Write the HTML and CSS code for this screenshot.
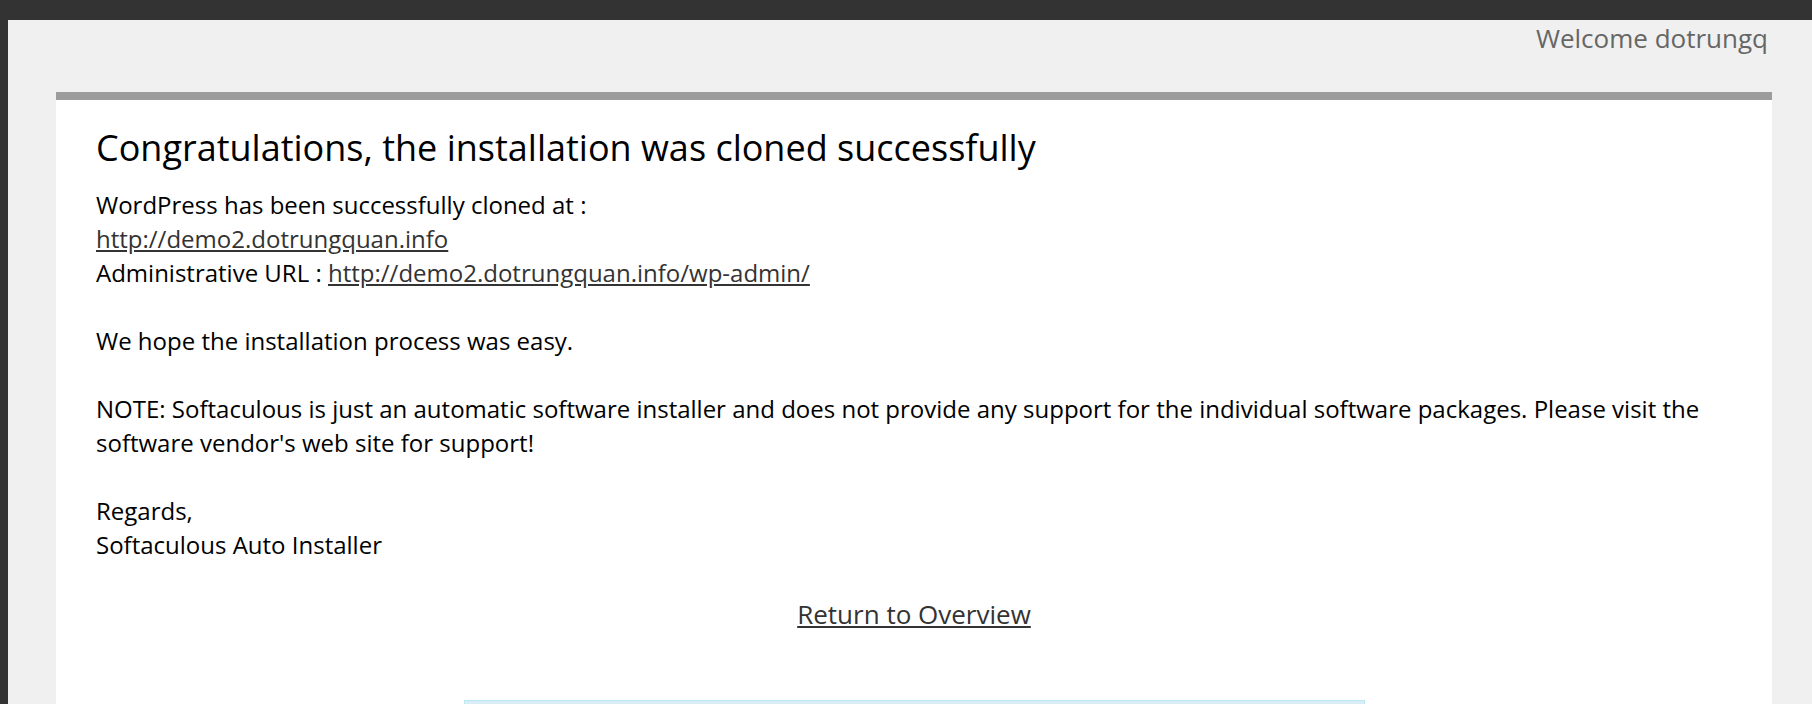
FILE: index.html
```html
<!DOCTYPE html>
<html>
<head>
<meta charset="utf-8">
<link rel="stylesheet" href="styles.css">
</head>
<body>
<div class="page">
  <div class="header"><span class="welcome">Welcome dotrungq</span></div>
  <div class="panel">
    <h1 class="title">Congratulations, the installation was cloned successfully</h1>
    <div class="message">
      WordPress has been successfully cloned at :<br>
      <a href="#">http://demo2.dotrungquan.info</a><br>
      Administrative URL : <a href="#">http://demo2.dotrungquan.info/wp-admin/</a><br>
      <br>
      We hope the installation process was easy.<br>
      <br>
      NOTE: Softaculous is just an automatic software installer and does not provide any support for the individual software packages. Please visit the software vendor's web site for support!<br>
      <br>
      Regards,<br>
      Softaculous Auto Installer
    </div>
    <div class="return"><a href="#">Return to Overview</a></div>
    <div class="notice"></div>
  </div>
</div>
</body>
</html>
```

FILE: styles.css
```css
html, body {
  margin: 0;
  padding: 0;
  height: 100%;
  overflow: hidden;
}
body {
  background: #333333;
  font-family: "Open Sans", "Noto Sans", sans-serif;
  padding-top: 20px;
  box-sizing: border-box;
}
.page {
  margin-left: 8px;
  background: #f0f0f0;
  height: 100%;
}
.header {
  height: 72px;
  text-align: right;
  padding-right: 44px;
  padding-top: 3px;
  box-sizing: border-box;
}
.welcome {
  display: inline-block;
  font-size: 26px;
  line-height: 30px;
  color: #666666;
}
.panel {
  margin: 0 40px 0 48px;
  border-top: 8px solid #9c9c9c;
  background: #ffffff;
  padding: 0 40px;
  height: 700px;
}
.title {
  margin: 0;
  padding-top: 26px;
  font-size: 36px;
  font-weight: normal;
  line-height: 44px;
  color: #000;
}
.message {
  margin-top: 18px;
  font-size: 24px;
  line-height: 34px;
  color: #000;
}
.message a {
  color: #333;
}
.return {
  text-align: center;
  margin-top: 36px;
  font-size: 26px;
  line-height: 32px;
}
.return a {
  color: #333;
}
.notice {
  width: 899px;
  margin: 70px auto 0;
  height: 60px;
  background: #d9edf7;
  border: 1px solid #bce8f1;
}
```
